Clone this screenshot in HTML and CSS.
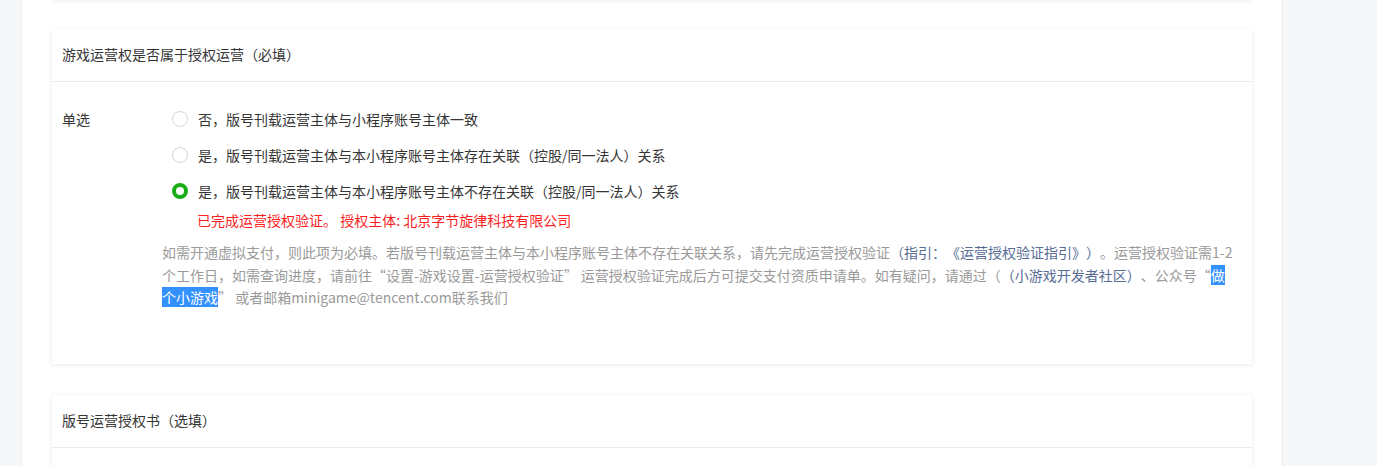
FILE: index.html
```html
<!DOCTYPE html>
<html lang="zh-CN">
<head>
  <meta charset="utf-8">
  <title>游戏运营授权</title>
  <link rel="stylesheet" href="styles.css">
</head>
<body>
<div class="layout">
  <div class="side"></div>

  <div class="main">
    <div class="card card-prev"></div>

    <div class="card">
      <div class="card-hd">游戏运营权是否属于授权运营（必填）</div>
      <div class="card-bd">
        <div class="field">
          <div class="field-label">单选</div>
          <div class="field-ctrl">
            <label class="radio"><span class="radio-dot"></span>否，版号刊载运营主体与小程序账号主体一致</label>
            <label class="radio"><span class="radio-dot"></span>是，版号刊载运营主体与本小程序账号主体存在关联（控股/同一法人）关系</label>
            <label class="radio"><span class="radio-dot checked"></span>是，版号刊载运营主体与本小程序账号主体不存在关联（控股/同一法人）关系</label>
            <div class="verified">已完成运营授权验证。 授权主体: 北京字节旋律科技有限公司</div>
          </div>
        </div>
        <p class="tips">如需开通虚拟支付，则此项为必填。若版号刊载运营主体与本小程序账号主体不存在关联关系，请先完成运营授权验证<a class="link" href="#">（指引：《运营授权验证指引》）</a>。运营授权验证需1-2个工作日，如需查询进度，请前往“设置-游戏设置-运营授权验证” 运营授权验证完成后方可提交支付资质申请单。如有疑问，请通过（<a class="link" href="#">（小游戏开发者社区）</a>、公众号“<span class="sel">做个小游戏</span>” 或者邮箱minigame@tencent.com联系我们</p>
      </div>
    </div>

    <div class="card">
      <div class="card-hd">版号运营授权书（选填）</div>
      <div class="card-bd"></div>
    </div>
  </div>

  <div class="aside"></div>
</div>
</body>
</html>
```

FILE: styles.css
```css
html, body {
  margin: 0;
  padding: 0;
  height: 100%;
  overflow: hidden;
  background: #fff;
  font-family: "Noto Sans CJK SC", "Noto Sans", sans-serif;
  font-size: 14px;
  color: #353535;
  text-spacing-trim: space-all;
}

.layout {
  display: grid;
  grid-template-columns: 22px 1260px 1fr;
  height: 100%;
}

.side {
  background: #f6f7f9;
  border-right: 1px solid #eceef1;
}

.aside {
  background: #f6f7f9;
  border-left: 1px solid #e9ebee;
}

.main {
  padding: 0 30px;
}

.card {
  background: #fff;
  margin-bottom: 31px;
  box-shadow: 0 1px 5px rgba(0, 0, 0, 0.09);
}

/* bottom edge of the card above, scrolled out of view */
.card-prev {
  height: 40px;
  margin-top: -41px;
  margin-bottom: 30px;
}

.card-hd {
  height: 52px;
  line-height: 51px;
  padding: 0 10px;
  border-bottom: 1px solid #ececec;
}

.card-bd {
  padding: 19px 15px 55px 10px;
}

.field {
  display: flex;
}

.field-label {
  width: 110px;
  flex: none;
  line-height: 36px;
}

.field-ctrl {
  display: flex;
  flex-direction: column;
}

.radio {
  display: flex;
  align-items: center;
  gap: 10px;
  height: 36px;
}

.radio-dot {
  box-sizing: border-box;
  width: 16px;
  height: 16px;
  border-radius: 50%;
  border: 1px solid #d6d6d6;
  background: #fff;
}

.radio-dot.checked {
  border: 4px solid #1aad19;
}

.verified {
  color: #fa1e1e;
  line-height: 22px;
  padding-left: 25px;
}

.tips {
  margin: 10px 0 0 100px;
  color: #9a9a9a;
  line-height: 22.5px;
}

.link {
  color: #576b95;
  text-decoration: none;
}

.sel {
  background: #3390ff;
  color: #fff;
}
```
